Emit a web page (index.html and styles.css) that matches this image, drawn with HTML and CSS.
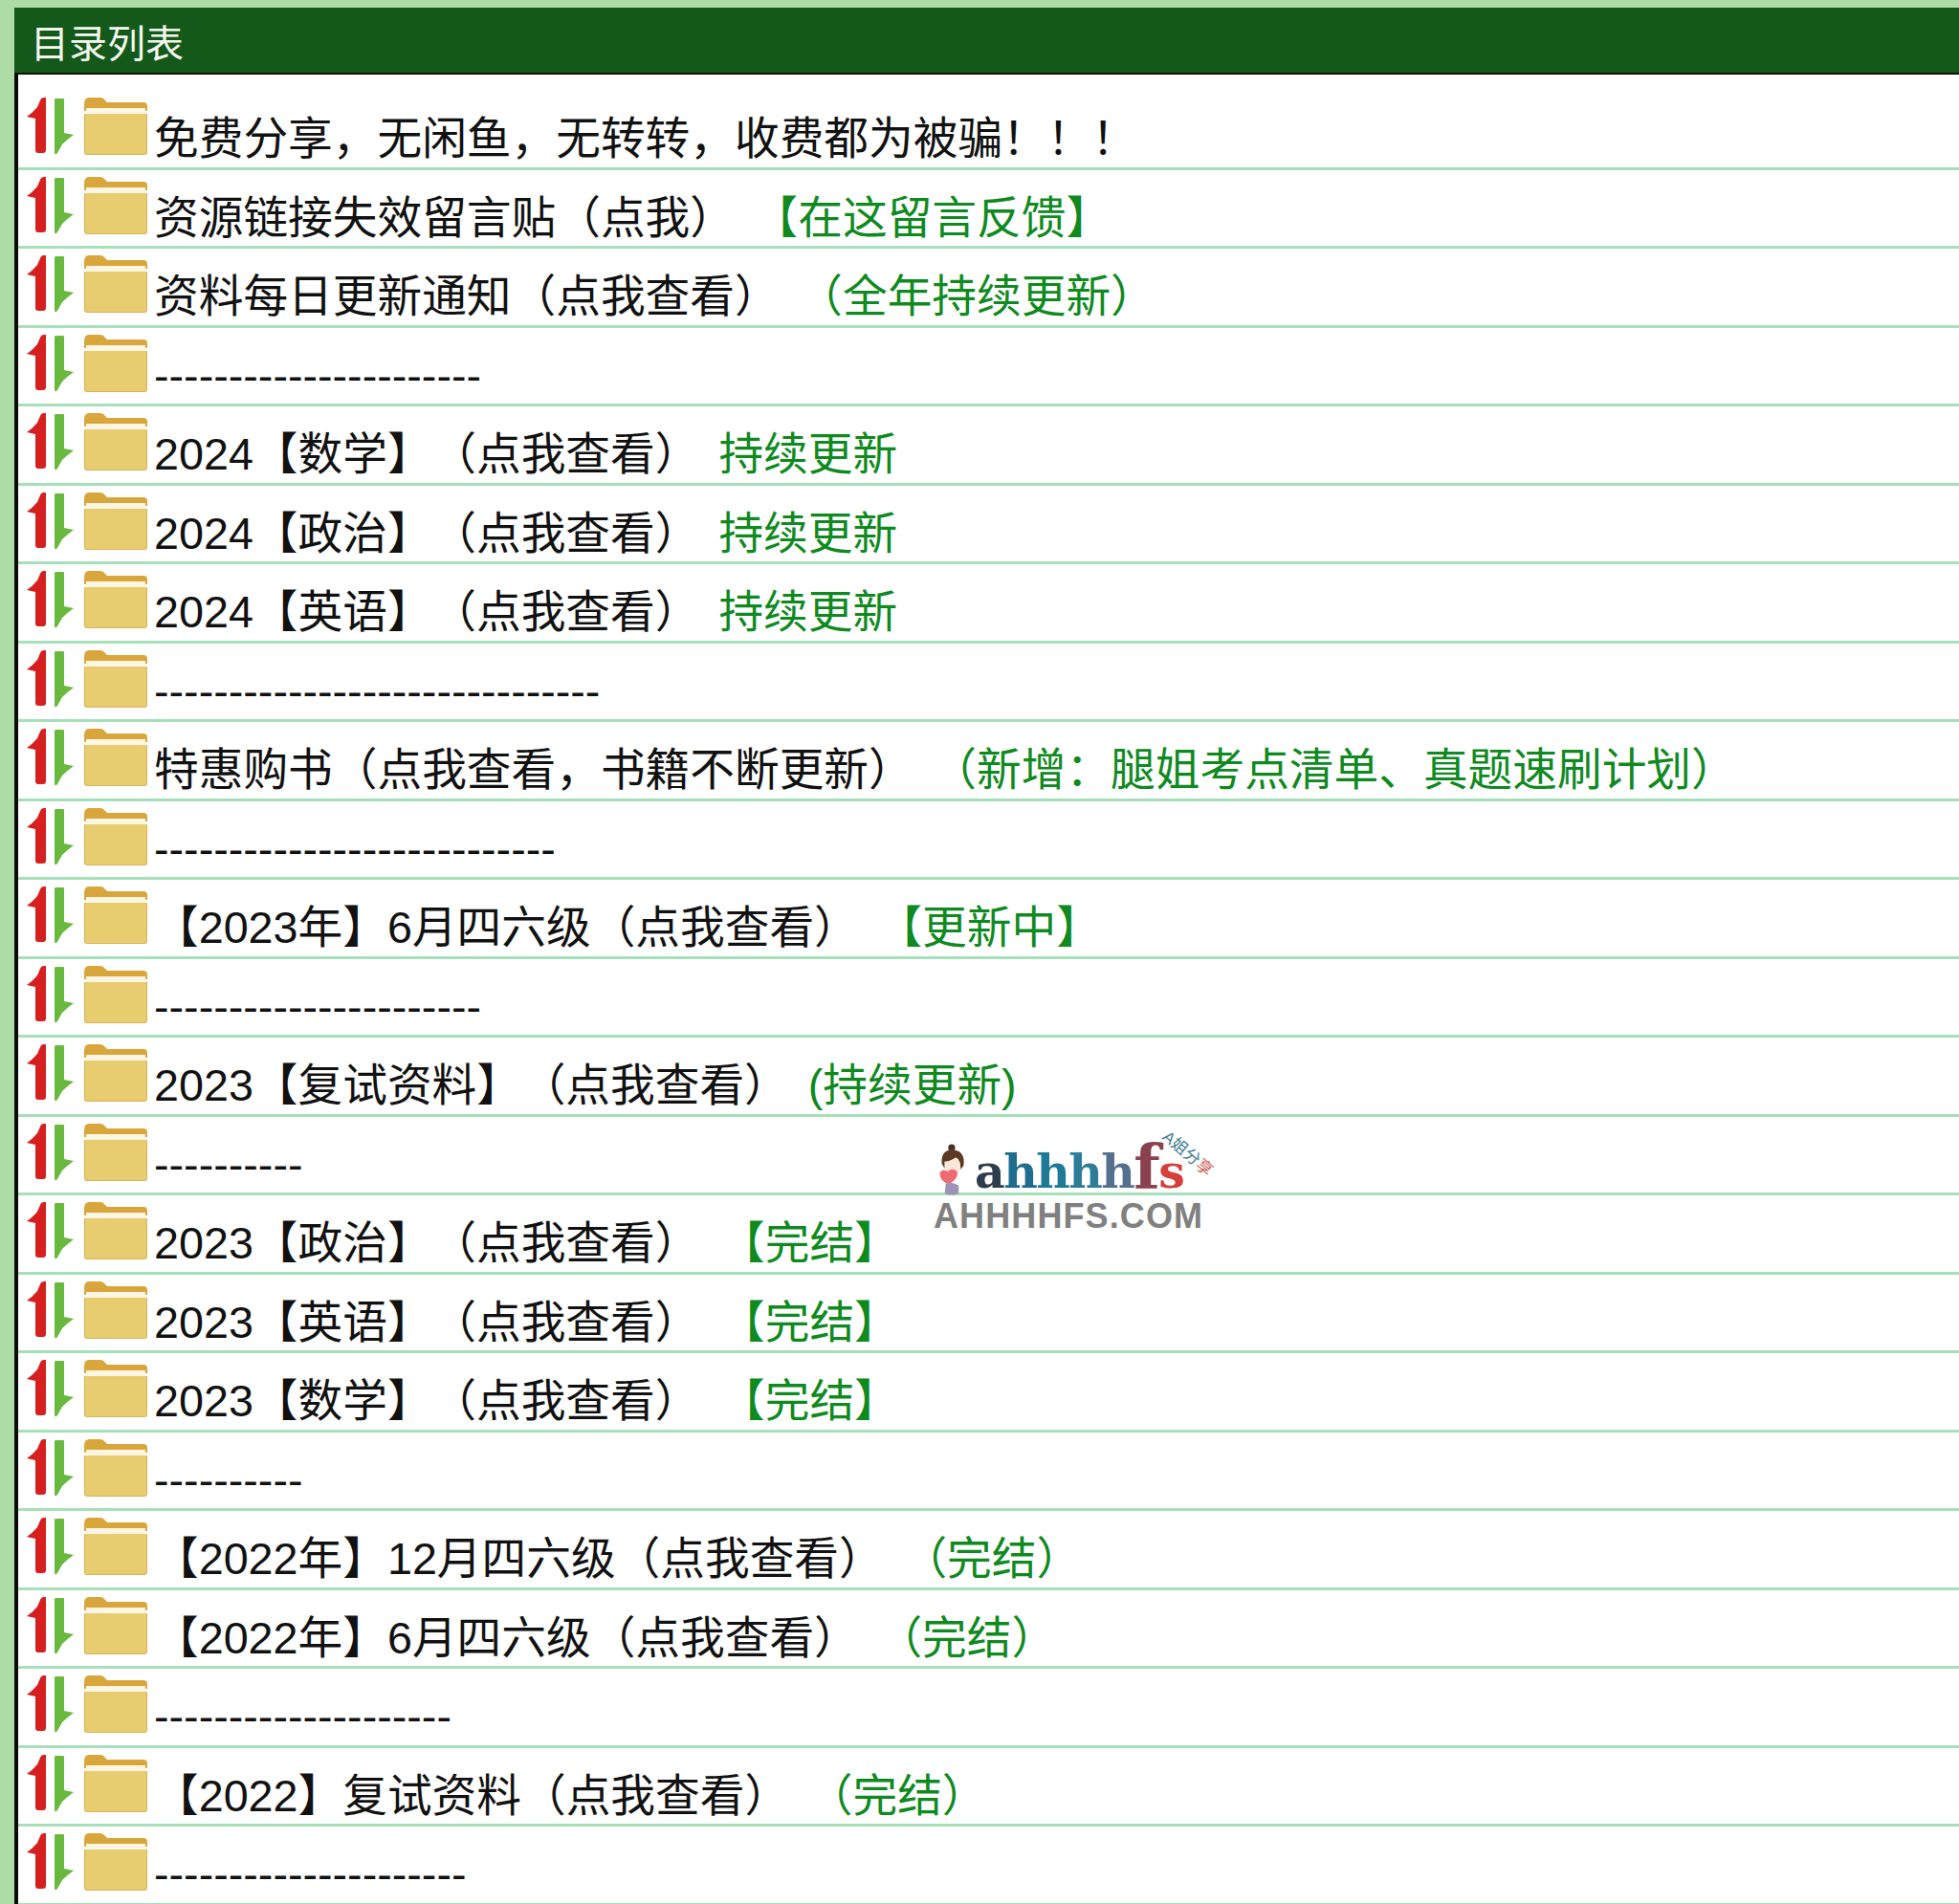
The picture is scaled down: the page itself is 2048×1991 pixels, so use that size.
FILE: index.html
```html
<!DOCTYPE html>
<html lang="zh-CN">
<head>
<meta charset="utf-8">
<title>目录列表</title>
<link rel="stylesheet" href="styles.css">
</head>
<body>
<svg class="defs" width="0" height="0" aria-hidden="true">
  <symbol id="sort" viewBox="0 0 52 64">
    <path d="M19 1 L21 1 L21 56 Q21 59 18 59 L13 59 Q10 59 10 56 L10 23 L1 21 Q7 17 12 11 L15 4 Q16 1 19 1 Z" fill="#d5201f"/>
    <path d="M30 3 Q30 2 32 2 L39 2 Q40 2 40 3 L40 38 L50 40 Q43 45 38 50 L33 59 Q30 62 30 58 Z" fill="#69b93f"/>
  </symbol>
  <symbol id="folder" viewBox="0 0 66 60">
    <path d="M0 7 Q0 0 5 0 L17 0 Q20 0 22 3 L24 5 L62 5 Q66 5 66 9 L66 14 L0 14 Z" fill="#d9a63c"/>
    <path d="M0 17 H66 V57 Q66 60 63 60 H3 Q0 60 0 57 Z" fill="#d9b45a"/>
    <rect x="2" y="11" width="62" height="6" fill="#fdf6e2"/>
    <path d="M1 17 H65 V57 Q65 59 63 59 H3 Q1 59 1 57 Z" fill="#e7cd70"/>
  </symbol>
</svg>

<div class="panel">
  <header class="panel-head">目录列表</header>
  <main class="list">
    <div class="row"><svg class="ico-sort"><use href="#sort"/></svg><svg class="ico-folder"><use href="#folder"/></svg><span class="label">免费分享，无闲鱼，无转转，收费都为被骗！！！</span></div>
    <div class="row"><svg class="ico-sort"><use href="#sort"/></svg><svg class="ico-folder"><use href="#folder"/></svg><span class="label">资源链接失效留言贴（点我）<em class="tag tag-wide">【在这留言反馈】</em></span></div>
    <div class="row"><svg class="ico-sort"><use href="#sort"/></svg><svg class="ico-folder"><use href="#folder"/></svg><span class="label">资料每日更新通知（点我查看）<em class="tag tag-wide">（全年持续更新）</em></span></div>
    <div class="row"><svg class="ico-sort"><use href="#sort"/></svg><svg class="ico-folder"><use href="#folder"/></svg><span class="label">----------------------</span></div>
    <div class="row"><svg class="ico-sort"><use href="#sort"/></svg><svg class="ico-folder"><use href="#folder"/></svg><span class="label">2024【数学】<span class="hint">（点我查看）</span><em class="tag">持续更新</em></span></div>
    <div class="row"><svg class="ico-sort"><use href="#sort"/></svg><svg class="ico-folder"><use href="#folder"/></svg><span class="label">2024【政治】<span class="hint">（点我查看）</span><em class="tag">持续更新</em></span></div>
    <div class="row"><svg class="ico-sort"><use href="#sort"/></svg><svg class="ico-folder"><use href="#folder"/></svg><span class="label">2024【英语】<span class="hint">（点我查看）</span><em class="tag">持续更新</em></span></div>
    <div class="row"><svg class="ico-sort"><use href="#sort"/></svg><svg class="ico-folder"><use href="#folder"/></svg><span class="label">------------------------------</span></div>
    <div class="row"><svg class="ico-sort"><use href="#sort"/></svg><svg class="ico-folder"><use href="#folder"/></svg><span class="label">特惠购书（点我查看，书籍不断更新）<em class="tag tag-wide">（新增：腿姐考点清单、真题速刷计划）</em></span></div>
    <div class="row"><svg class="ico-sort"><use href="#sort"/></svg><svg class="ico-folder"><use href="#folder"/></svg><span class="label">---------------------------</span></div>
    <div class="row"><svg class="ico-sort"><use href="#sort"/></svg><svg class="ico-folder"><use href="#folder"/></svg><span class="label">【2023年】6月四六级（点我查看）<em class="tag tag-wide">【更新中】</em></span></div>
    <div class="row"><svg class="ico-sort"><use href="#sort"/></svg><svg class="ico-folder"><use href="#folder"/></svg><span class="label">----------------------</span></div>
    <div class="row"><svg class="ico-sort"><use href="#sort"/></svg><svg class="ico-folder"><use href="#folder"/></svg><span class="label">2023【复试资料】<span class="hint">（点我查看）</span><em class="tag">(持续更新)</em></span></div>
    <div class="row"><svg class="ico-sort"><use href="#sort"/></svg><svg class="ico-folder"><use href="#folder"/></svg><span class="label">----------</span></div>
    <div class="row"><svg class="ico-sort"><use href="#sort"/></svg><svg class="ico-folder"><use href="#folder"/></svg><span class="label">2023【政治】<span class="hint">（点我查看）</span><em class="tag tag-wider">【完结】</em></span></div>
    <div class="row"><svg class="ico-sort"><use href="#sort"/></svg><svg class="ico-folder"><use href="#folder"/></svg><span class="label">2023【英语】<span class="hint">（点我查看）</span><em class="tag tag-wider">【完结】</em></span></div>
    <div class="row"><svg class="ico-sort"><use href="#sort"/></svg><svg class="ico-folder"><use href="#folder"/></svg><span class="label">2023【数学】<span class="hint">（点我查看）</span><em class="tag tag-wider">【完结】</em></span></div>
    <div class="row"><svg class="ico-sort"><use href="#sort"/></svg><svg class="ico-folder"><use href="#folder"/></svg><span class="label">----------</span></div>
    <div class="row"><svg class="ico-sort"><use href="#sort"/></svg><svg class="ico-folder"><use href="#folder"/></svg><span class="label">【2022年】12月四六级（点我查看）<em class="tag tag-wide">（完结）</em></span></div>
    <div class="row"><svg class="ico-sort"><use href="#sort"/></svg><svg class="ico-folder"><use href="#folder"/></svg><span class="label">【2022年】6月四六级（点我查看）<em class="tag tag-wide">（完结）</em></span></div>
    <div class="row"><svg class="ico-sort"><use href="#sort"/></svg><svg class="ico-folder"><use href="#folder"/></svg><span class="label">--------------------</span></div>
    <div class="row"><svg class="ico-sort"><use href="#sort"/></svg><svg class="ico-folder"><use href="#folder"/></svg><span class="label">【2022】复试资料（点我查看）<em class="tag tag-wide">（完结）</em></span></div>
    <div class="row"><svg class="ico-sort"><use href="#sort"/></svg><svg class="ico-folder"><use href="#folder"/></svg><span class="label">---------------------</span></div>
  </main>
</div>

<div class="mark">
  <div class="mark-top">
    <svg class="girl" viewBox="0 0 30 52">
      <circle cx="13" cy="4" r="3.5" fill="#4a2f22"/>
      <path d="M3 20 Q2 6 14 6 Q27 7 25 22 L22 26 Q22 16 17 14 Q12 18 6 18 L6 25 Z" fill="#5d3a26"/>
      <path d="M6 18 Q12 18 17 14 Q22 16 22 26 Q19 30 13 30 Q7 29 6 25 Z" fill="#fbe6d8"/>
      <path d="M1 30 Q3 24 9 28 Q15 23 19 29 Q19 36 10 41 Q1 37 1 30 Z" fill="#f06a72"/>
      <path d="M7 40 Q13 38 20 42 L20 50 Q13 53 6 50 Z" fill="#9c93b8"/>
    </svg>
    <span class="brand"><b class="c1">a</b><b class="c2">h</b><b class="c3">h</b><b class="c4">h</b><b class="c5">h</b><b class="c6">f</b><b class="c7">s</b></span>
    <span class="brand-sub">A姐分<i class="sub-red">享</i></span>
  </div>
  <div class="mark-url">AHHHHFS.COM</div>
</div>
</body>
</html>
```
FILE: styles.css
```css
* { box-sizing: border-box; }
html, body { margin: 0; padding: 0; }
body {
  width: 2048px;
  height: 1991px;
  overflow: hidden;
  position: relative;
  background: #aedca6;
  font-family: "Liberation Sans", "Noto Sans CJK SC", sans-serif;
}
.defs { position: absolute; }
.panel {
  margin: 8px 0 0 15px;
  height: 1983px;
  background: #fff;
  display: flex;
  flex-direction: column;
}
.panel-head {
  flex: none;
  height: 70px;
  padding: 13px 0 0 17px;
  background: #15591a;
  border-bottom: 2px solid #0a0f08;
  color: #f4f8f0;
  font-size: 40px;
  line-height: 50px;
}
.list {
  flex: 1;
  padding-top: 17px;
  border-left: 4px solid #0a0a0a;
  overflow: hidden;
}
.row {
  height: 82.52px;
  position: relative;
  display: flex;
  align-items: flex-start;
  padding: 6px 0 0 8px;
  border-bottom: 3px solid #a5e0ba;
  white-space: pre;
}
.ico-sort { flex: none; width: 52px; height: 64px; }
.ico-folder { flex: none; width: 66px; height: 60px; margin: 1px 0 0 9px; }
.label {
  margin: 14px 0 0 7px;
  font-size: 46.7px;
  line-height: 60px;
  color: #111;
}
.hint { margin-left: 23px; }
.tag { margin-left: 20px; font-style: normal; color: #0f8a1f; }
.tag-wide { margin-left: 43px; }
.tag-wider { margin-left: 45px; }
.mark {
  position: absolute;
  left: 976px;
  top: 1184px;
  width: 310px;
}
.mark-top { position: relative; height: 70px; display: flex; align-items: flex-start; }
.girl { flex: none; width: 32px; height: 54px; margin: 12px 0 0 5px; }
.brand {
  margin: 0 0 0 6px;
  font: 700 49px/72px "DejaVu Serif", serif;
  letter-spacing: -1.6px;
  white-space: nowrap;
}
.brand b { font-weight: 700; }
.c1 { color: #2e3d4b; }
.c2 { color: #1f6d8e; }
.c3 { color: #1f7a96; }
.c4 { color: #2d7d98; }
.c5 { color: #55708f; }
.c6 { color: #8a4150; font-size: 64px; }
.c7 { color: #d4413c; }
.brand-sub {
  position: absolute;
  left: 248px;
  top: -5px;
  font-size: 17px;
  line-height: 20px;
  color: #3f7b8f;
  white-space: nowrap;
  transform: rotate(40deg);
  transform-origin: left top;
}
.sub-red { font-style: normal; color: #cf5a52; }
.mark-url {
  font-size: 36px;
  line-height: 36px;
  font-weight: 700;
  color: #808080;
  letter-spacing: 1.1px;
}
```
